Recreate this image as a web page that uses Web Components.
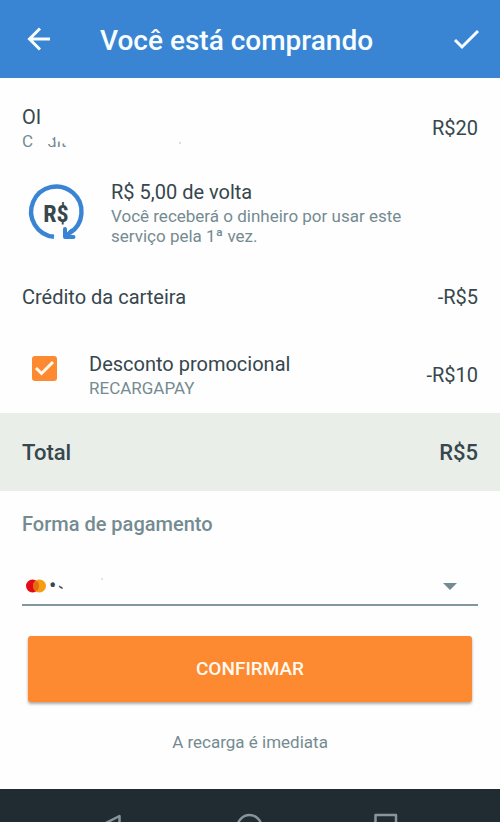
<!DOCTYPE html>
<html lang="pt-BR">
<head>
<meta charset="utf-8">
<meta name="viewport" content="width=device-width, initial-scale=1">
<title>Você está comprando</title>
<style>
  html, body { margin: 0; height: 100%; }
  body {
    --blue: #3985d3; --ink: #36474d; --muted: #748b91; --orange: #fd8930;
    font: 400 20px/24px Roboto, "Liberation Sans", sans-serif;
    color: var(--ink); background: #fefefe;
  }
</style>
</head>
<body>
<checkout-page></checkout-page>

<template id="t-bar">
  <style>
    :host { display: flex; align-items: center; height: 78px; box-sizing: border-box; padding: 0 20px 0 26px; background: var(--blue); color: #f8fdff; flex: none; }
    h1 { flex: 1; margin: 0 0 0 48px; font-size: 28px; line-height: 32px; font-weight: 500; padding-top: 3px; }
    button { display: block; border: 0; padding: 0; background: none; color: inherit; }
    svg { display: block; fill: none; stroke: currentColor; stroke-width: 3; }
  </style>
  <button type="button" aria-label="Voltar"><svg width="26" height="26" viewBox="0 0 26 26"><path d="M24 13H3.5M14 2.5L3.5 13L14 23.5"/></svg></button>
  <h1><slot></slot></h1>
  <button type="button" aria-label="Concluir"><svg width="28" height="26" viewBox="0 0 28 26"><path d="M3 14L10 21L26 5"/></svg></button>
</template>

<template id="t-row">
  <style>
    :host { display: flex; align-items: center; padding: 0 22px; }
    .lead { align-self: flex-start; flex: none; }
    .text { flex: 1; min-width: 0; display: grid; gap: 2px; }
    .sub { color: var(--muted); font-size: 17px; line-height: 20px; }
    ::slotted([slot=amount]) { flex: none; }
  </style>
  <div class="lead"><slot name="lead"></slot></div>
  <div class="text"><div><slot></slot></div><div class="sub"><slot name="sub"></slot></div></div>
  <slot name="amount"></slot>
</template>

<template id="t-cashback">
  <style>
    :host { display: block; width: 89px; }
    svg { display: block; }
    text { font: 700 24px "Liberation Sans Narrow", "Roboto Condensed", Roboto, sans-serif; fill: var(--ink); }
  </style>
  <svg width="66" height="66" viewBox="0 0 66 66" role="img" aria-label="R$ de volta">
    <path d="M32 56.800A25.200 25.200 0 1 1 47.500 53.200" fill="none" stroke="#3985d3" stroke-width="4.400"/>
    <path d="M43 49V57H51.500M44 56L50 50.500" fill="none" stroke="#3985d3" stroke-width="4" stroke-linecap="round" stroke-linejoin="round"/>
    <text x="34" y="42" text-anchor="middle">R$</text>
  </svg>
</template>

<template id="t-check">
  <style>
    :host { display: block; width: 67px; }
    label { display: grid; width: 25px; margin: 4px 0 0 10px; }
    input, svg { grid-area: 1 / 1; width: 25px; height: 25px; margin: 0; }
    input { appearance: none; border-radius: 3px; border: 2px solid var(--orange); }
    input:checked { background: var(--orange); }
    svg { pointer-events: none; fill: none; stroke: #fffaf0; stroke-width: 3; }
    input:not(:checked) + svg { display: none; }
  </style>
  <label><input type="checkbox" checked aria-label="Desconto promocional"><svg viewBox="0 0 25 25"><path d="M4 12L9.500 17.500L21 6"/></svg></label>
</template>

<template id="t-hidden">
  <style>
    :host { display: flex; }
    .cut { margin-left: 14px; clip-path: polygon(0 65%, 28% 65%, 28% 30%, 44% 30%, 44% 52%, 75% 52%, 75% 62%, 100% 62%, 100% 100%, 0 100%); }
    svg { margin-left: 111px; }
  </style>
  <span>C</span><span class="cut">dit</span>
  <svg width="6" height="20" viewBox="0 0 6 20"><path d="M2 12h2" stroke="#b5bec1"/></svg>
</template>

<template id="t-total">
  <style>
    :host { display: flex; justify-content: space-between; padding: 26px 22px 24px; background: #eaeee9; font-size: 22px; line-height: 28px; font-weight: 500; }
  </style>
  <slot></slot><slot name="amount"></slot>
</template>

<template id="t-pay">
  <style>
    :host { display: block; padding: 0 22px; }
    label { display: block; color: var(--muted); font-weight: 500; font-size: 20px; line-height: 24px; }
    .field { display: grid; align-items: center; margin-top: 32px; border-bottom: 2px solid #8097a0; }
    select, svg { grid-area: 1 / 1; }
    select { appearance: none; width: 100%; height: 36px; border: 0; border-radius: 0; padding: 0 48px 0 27px; background: none; font: inherit; font-size: 22px; color: var(--ink); }
    svg { pointer-events: none; }
    .arrow { justify-self: end; margin-right: 21px; }
  </style>
  <label for="method">Forma de pagamento</label>
  <div class="field">
    <select id="method"><option>•</option></select>
    <svg width="90" height="36" viewBox="0 0 90 36">
      <circle cx="10.500" cy="18" r="6.500" fill="#e30b17"/><circle cx="17.500" cy="18" r="6.500" fill="#f59d13"/>
      <path d="M14 12.500A6.500 6.500 0 0 1 14 23.500A6.500 6.500 0 0 1 14 12.500" fill="#e66c12"/>
      <path d="M37 18Q38 20.500 40.500 20.500L40 19.200Q38.500 19.500 38 18Z" fill="#36474d" stroke="#36474d" stroke-width=".6"/>
      <path d="M79 11h2" stroke="#c3c9cb"/>
    </svg>
    <svg class="arrow" width="14" height="8" viewBox="0 0 14 8"><path d="M0 1H14L7 8Z" fill="#748b91"/></svg>
  </div>
</template>

<template id="t-confirm">
  <style>
    :host { display: block; padding: 0 28px; }
    button { display: block; width: 100%; height: 66px; border: 0; border-radius: 3px; padding: 0; background: var(--orange); color: #fffaf0; font: inherit; font-weight: 500; font-size: 19px; box-shadow: 0 2px 3px rgba(60, 40, 30, .4); }
  </style>
  <button type="button"><slot></slot></button>
</template>

<template id="t-nav">
  <style>
    :host { display: grid; grid-template-columns: repeat(3, 1fr); justify-items: center; align-items: start; flex: 1 0 33px; height: 33px; box-sizing: border-box; padding: 24px 45px 0; background: #202c32; overflow: hidden; }
    button { display: block; border: 0; padding: 0; background: none; }
    svg { display: block; fill: none; stroke: #88949c; stroke-width: 2.500; stroke-linejoin: round; }
  </style>
  <button type="button" aria-label="Voltar"><svg width="28" height="28" viewBox="0 0 28 28"><path d="M20.500 3V25L-1 14Z"/></svg></button>
  <button type="button" aria-label="Início"><svg width="28" height="28" viewBox="0 0 28 28"><circle cx="13.500" cy="14" r="12"/></svg></button>
  <button type="button" aria-label="Recentes"><svg width="28" height="28" viewBox="0 0 28 28"><path d="M2.500 2H23V24H2.500Z"/></svg></button>
</template>

<template id="t-page">
  <style>
    :host { display: flex; flex-direction: column; height: 100vh; overflow: hidden; }
    main { flex: none; }
    .items { display: grid; padding: 27px 0 15px; }
    .back { margin-top: 29px; }
    .credit { margin-top: 39px; }
    .promo { margin-top: 43px; }
    pay-method { margin-top: 21px; }
    confirm-button { margin-top: 30px; }
    .note { margin: 30px 0 37px; text-align: center; color: var(--muted); font-size: 17px; line-height: 20px; }
  </style>
  <top-bar>Você está comprando</top-bar>
  <main>
    <section class="items">
      <order-row>OI<masked-text slot="sub"></masked-text><span slot="amount">R$20</span></order-row>
      <order-row class="back"><cashback-icon slot="lead"></cashback-icon>R$ 5,00 de volta<span slot="sub">Você receberá o dinheiro por usar este<br>serviço pela 1ª vez.</span></order-row>
      <order-row class="credit">Crédito da carteira<span slot="amount">-R$5</span></order-row>
      <order-row class="promo"><promo-check slot="lead"></promo-check>Desconto promocional<span slot="sub">RECARGAPAY</span><span slot="amount">-R$10</span></order-row>
    </section>
    <total-row>Total<span slot="amount">R$5</span></total-row>
    <pay-method></pay-method>
    <confirm-button>CONFIRMAR</confirm-button>
    <p class="note">A recarga é imediata</p>
  </main>
  <system-nav></system-nav>
</template>

<script>
  const define = (name, id, setup) => customElements.define(name, class extends HTMLElement {
    constructor() {
      super();
      this.attachShadow({ mode: "open" }).append(document.getElementById(id).content.cloneNode(true));
    }
    connectedCallback() { if (setup) setup(this); }
  });
  define("top-bar", "t-bar");
  // Rows without a second line drop its box, so that the gap goes too.
  define("order-row", "t-row", el => {
    if (!el.querySelector("[slot=sub]")) el.shadowRoot.querySelector(".sub").hidden = true;
  });
  define("cashback-icon", "t-cashback");
  define("promo-check", "t-check");
  define("masked-text", "t-hidden");
  define("total-row", "t-total");
  define("pay-method", "t-pay");
  define("confirm-button", "t-confirm");
  define("system-nav", "t-nav");
  define("checkout-page", "t-page");
</script>
</body>
</html>
